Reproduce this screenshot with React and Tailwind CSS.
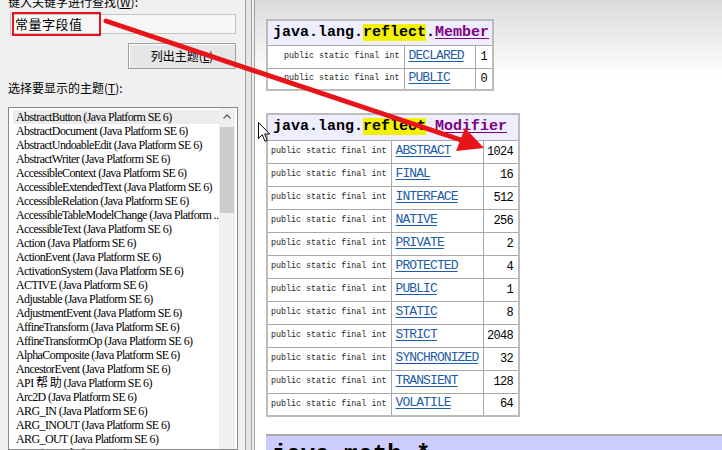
const items = [
  "AbstractButton (Java Platform SE 6)",
  "AbstractDocument (Java Platform SE 6)",
  "AbstractUndoableEdit (Java Platform SE 6)",
  "AbstractWriter (Java Platform SE 6)",
  "AccessibleContext (Java Platform SE 6)",
  "AccessibleExtendedText (Java Platform SE 6)",
  "AccessibleRelation (Java Platform SE 6)",
  "AccessibleTableModelChange (Java Platform ...",
  "AccessibleText (Java Platform SE 6)",
  "Action (Java Platform SE 6)",
  "ActionEvent (Java Platform SE 6)",
  "ActivationSystem (Java Platform SE 6)",
  "ACTIVE (Java Platform SE 6)",
  "Adjustable (Java Platform SE 6)",
  "AdjustmentEvent (Java Platform SE 6)",
  "AffineTransform (Java Platform SE 6)",
  "AffineTransformOp (Java Platform SE 6)",
  "AlphaComposite (Java Platform SE 6)",
  "AncestorEvent (Java Platform SE 6)",
  "API 帮 助 (Java Platform SE 6)",
  "Arc2D (Java Platform SE 6)",
  "ARG_IN (Java Platform SE 6)",
  "ARG_INOUT (Java Platform SE 6)",
  "ARG_OUT (Java Platform SE 6)",
  "Area (Java Platform SE 6)",
];

const memberRows = [
  ["DECLARED", "1"],
  ["PUBLIC", "0"],
];

const modifierRows = [
  ["ABSTRACT", "1024"],
  ["FINAL", "16"],
  ["INTERFACE", "512"],
  ["NATIVE", "256"],
  ["PRIVATE", "2"],
  ["PROTECTED", "4"],
  ["PUBLIC", "1"],
  ["STATIC", "8"],
  ["STRICT", "2048"],
  ["SYNCHRONIZED", "32"],
  ["TRANSIENT", "128"],
  ["VOLATILE", "64"],
];

function Header({ name }) {
  return (
    <td
      colSpan={3}
      className="border border-[#a8a8a8] bg-[#eeeeff] px-[5px] text-left font-['Liberation_Mono',monospace] text-[15px] font-bold leading-[20px] text-black whitespace-nowrap"
    >
      java.lang.<span className="bg-[#f2f200]">reflect</span>.
      <span className="text-[#800080] underline underline-offset-2">{name}</span>
    </td>
  );
}

function Row({ name, val, h }) {
  return (
    <tr className={h}>
      <td className="border border-[#a8a8a8] pr-[4px] text-right font-['Liberation_Mono',monospace] text-[8.4px] text-[#282828] whitespace-nowrap">
        public static final int
      </td>
      <td className="border border-[#a8a8a8] pb-[3px] pl-[4px] text-left font-['Liberation_Mono',monospace] text-[13px] leading-[15px] tracking-[-0.9px] text-[#1c5ca8] underline underline-offset-2 whitespace-nowrap">
        {name}
      </td>
      <td className="border border-[#a8a8a8] pr-[5px] text-right font-['Liberation_Mono',monospace] text-[12px] tracking-[-0.7px] text-black whitespace-nowrap">
        {val}
      </td>
    </tr>
  );
}

export default function App() {
  return (
    <div className="relative flex h-[450px] w-[722px] overflow-hidden bg-white">
      {/* Left panel */}
      <div className="flex h-full w-[245px] shrink-0 flex-col bg-[#f0f0f0] font-['Noto_Sans_CJK_SC',sans-serif] text-black">
        <div className="ml-[8px] mt-[-5px] h-[14px] shrink-0 whitespace-nowrap text-[12px] leading-[14px]">
          键入关键字进行查找(<span className="underline">W</span>):
        </div>
        <div className="ml-[10px] mt-[5px] flex h-[20px] w-[226px] shrink-0 items-center border border-[#c4c4c4] bg-[#f7f7f7] pl-[4px]">
          <span className="text-[13px] leading-[16px] tracking-[0.5px]">常量字段值</span>
        </div>
        <div className="ml-[128px] mt-[9px] flex h-[26px] w-[108px] shrink-0 items-center justify-center border border-[#a0a0a0] bg-[#e6e6e6] shadow-[inset_1px_1px_0_#ffffff]">
          <span className="text-[12px] leading-[14px]">
            列出主题(<span className="underline">L</span>)
          </span>
        </div>
        <div className="ml-[8px] mt-[12px] h-[14px] shrink-0 whitespace-nowrap text-[12px] leading-[14px]">
          选择要显示的主题(<span className="underline">T</span>):
        </div>
        <div className="ml-[8px] mt-[12px] flex min-h-0 w-[230px] flex-1 overflow-hidden border border-[#8a8a8a] bg-white">
          <div className="flex-1 overflow-hidden pl-[4px] pt-[2px]">
            {items.map((t, i) => (
              <div
                key={i}
                className={`h-[14px] whitespace-nowrap pl-[3px] font-['Liberation_Serif','Noto_Sans_CJK_SC',serif] text-[12px] leading-[14px] tracking-[-0.6px] ${
                  i === 0 ? "bg-[#ececec]" : ""
                }`}
              >
                {t}
              </div>
            ))}
          </div>
          <div className="mr-[2px] flex w-[16px] shrink-0 flex-col items-center bg-[#f0f0f0]">
            <div className="flex h-[16px] w-full shrink-0 items-center justify-center">
              <svg width="8" height="5" viewBox="0 0 8 5">
                <path d="M0.5 4.5 L4 1 L7.5 4.5" fill="none" stroke="#606060" strokeWidth="1.3" />
              </svg>
            </div>
            <div className="mt-[3px] h-[86px] w-[14px] shrink-0 bg-[#cdcdcd]" />
          </div>
        </div>
      </div>

      {/* Splitter */}
      <div className="flex h-full shrink-0">
        <div className="w-px bg-[#a0a0a0]" />
        <div className="w-[5px] bg-[#e6e6e6]" />
        <div className="w-px bg-[#a0a0a0]" />
        <div className="w-[2px] bg-[#f0f0f0]" />
        <div className="w-px bg-[#a0a0a0]" />
      </div>

      {/* Right panel */}
      <div className="flex h-full flex-1 flex-col items-start bg-[linear-gradient(to_bottom,#dadada_0px,#ffffff_75px)] pl-[11px] pt-[19px]">
        <table className="w-[226px] shrink-0 table-fixed border-collapse border-2 border-[#bcbcbc] bg-white">
          <colgroup>
            <col className="w-[137px]" />
            <col className="w-[71px]" />
            <col className="w-[18px]" />
          </colgroup>
          <tbody>
            <tr className="h-[25px]">
              <Header name="Member" />
            </tr>
            {memberRows.map(([n, v], i) => (
              <Row key={n} name={n} val={v} h={i === 0 ? "h-[23px]" : "h-[22px]"} />
            ))}
          </tbody>
        </table>

        <table className="mt-[22px] w-[252px] shrink-0 table-fixed border-collapse border-2 border-[#bcbcbc] bg-white">
          <colgroup>
            <col className="w-[124px]" />
            <col className="w-[92px]" />
            <col className="w-[36px]" />
          </colgroup>
          <tbody>
            <tr className="h-[26px]">
              <Header name="Modifier" />
            </tr>
            {modifierRows.map(([n, v]) => (
              <Row key={n} name={n} val={v} h="h-[23px]" />
            ))}
          </tbody>
        </table>

        <div className="mt-[17px] h-[40px] w-[470px] shrink-0 border-t-2 border-[#a8a8a8] bg-[#ccccff] pl-[6px] pt-[5px] font-['Liberation_Mono',monospace] text-[24px] font-bold leading-[28px] text-black">
          java.math.*
        </div>
      </div>

      {/* Mouse cursor */}
      <svg className="pointer-events-none absolute left-[258px] top-[122px]" width="13" height="21" viewBox="0 0 13 21">
        <path d="M0.5 0.5 L0.5 16.5 L4.3 12.8 L7 19.3 L9.3 18.3 L6.7 12 L11.7 12 Z" fill="#ffffff" stroke="#000000" strokeWidth="1" />
      </svg>

      {/* Red annotation */}
      <div className="pointer-events-none absolute left-[12px] top-[12px] h-[24px] w-[89px] border-2 border-[#e8141a]" />
      <svg className="pointer-events-none absolute left-0 top-0" width="722" height="450" viewBox="0 0 722 450">
        <line x1="106" y1="21" x2="464" y2="141" stroke="#e8141a" strokeWidth="5" strokeLinecap="round" />
        <polygon points="484,148 465,128 456,151" fill="#e8141a" />
      </svg>
    </div>
  );
}
